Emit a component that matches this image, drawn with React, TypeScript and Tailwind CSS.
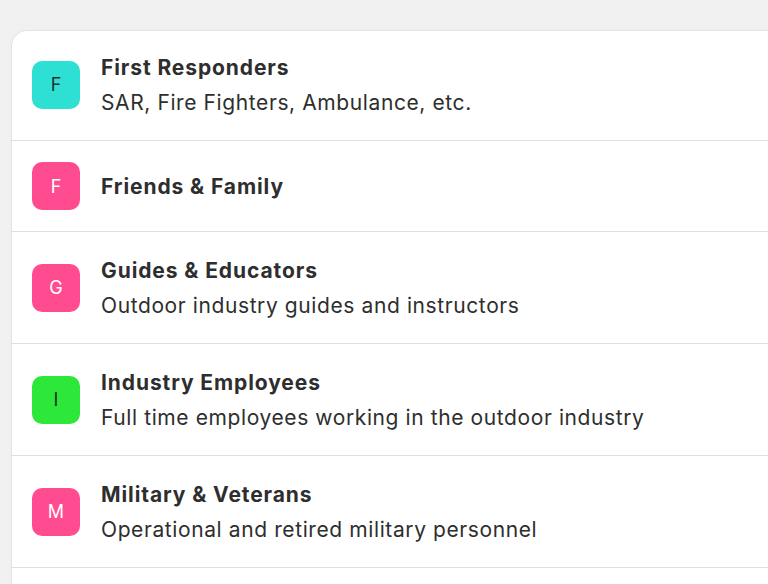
const groups = [
  {
    letter: "F",
    title: "First Responders",
    subtitle: "SAR, Fire Fighters, Ambulance, etc.",
    color: "bg-[#2ee0d4] text-[#1f3331]",
  },
  {
    letter: "F",
    title: "Friends & Family",
    subtitle: "",
    color: "bg-[#ff4b8f] text-white",
  },
  {
    letter: "G",
    title: "Guides & Educators",
    subtitle: "Outdoor industry guides and instructors",
    color: "bg-[#ff4b8f] text-white",
  },
  {
    letter: "I",
    title: "Industry Employees",
    subtitle: "Full time employees working in the outdoor industry",
    color: "bg-[#2de83a] text-[#17331a]",
  },
  {
    letter: "M",
    title: "Military & Veterans",
    subtitle: "Operational and retired military personnel",
    color: "bg-[#ff4b8f] text-white",
  },
];

export default function App() {
  return (
    <div
      className="h-[584px] w-[768px] overflow-hidden bg-[#f0f0f0] pl-[11px] pt-[30px]"
      style={{ fontFamily: "Inter, 'Noto Sans', sans-serif" }}
    >
      <ul className="h-[600px] w-[780px] rounded-tl-[16px] border-l border-t border-[#e2e2e2] bg-white">
        {groups.map((g, i) => (
          <li
            key={i}
            className="flex items-center border-b border-[#e0e0e0] pb-[21px] pl-[20px] pt-[21px] first:pt-[19px]"
          >
            <div
              className={`flex h-[48px] w-[48px] shrink-0 items-center justify-center rounded-[10px] text-[18px] ${g.color}`}
            >
              {g.letter}
            </div>
            <div className="ml-[21px] flex translate-y-[1px] flex-col text-[#2e2e2e]">
              <span className="text-[21px] font-bold leading-[34px] tracking-[0.9px]">
                {g.title}
              </span>
              {g.subtitle && (
                <span className="text-[21px] leading-[35px] tracking-[0.6px]">
                  {g.subtitle}
                </span>
              )}
            </div>
          </li>
        ))}
      </ul>
    </div>
  );
}
